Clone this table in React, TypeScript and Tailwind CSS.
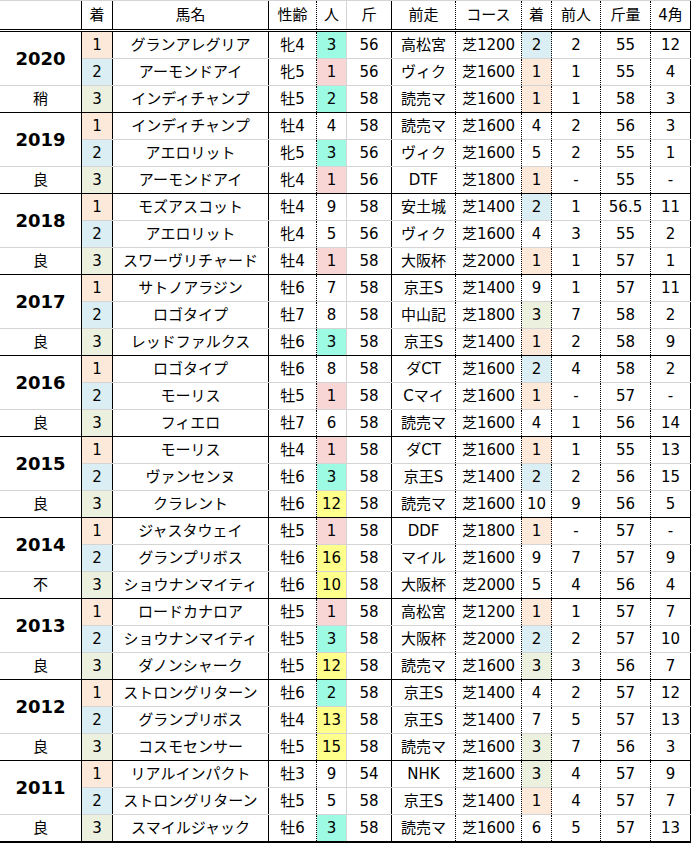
const font = { fontFamily: '"DejaVu Sans", "Noto Sans CJK JP", sans-serif' };

type Row = [string, string, string, string, string, string, string, string, string, string, string];

interface Group {
  year: string;
  cond: string;
  rows: Row[];
}

const groups: Group[] = [
  {
    year: '2020',
    cond: '稍',
    rows: [
      ['1', 'グランアレグリア', '牝4', '3', '56', '高松宮', '芝1200', '2', '2', '55', '12'],
      ['2', 'アーモンドアイ', '牝5', '1', '56', 'ヴィク', '芝1600', '1', '1', '55', '4'],
      ['3', 'インディチャンプ', '牡5', '2', '58', '読売マ', '芝1600', '1', '1', '58', '3'],
    ],
  },
  {
    year: '2019',
    cond: '良',
    rows: [
      ['1', 'インディチャンプ', '牡4', '4', '58', '読売マ', '芝1600', '4', '2', '56', '3'],
      ['2', 'アエロリット', '牝5', '3', '56', 'ヴィク', '芝1600', '5', '2', '55', '1'],
      ['3', 'アーモンドアイ', '牝4', '1', '56', 'DTF', '芝1800', '1', '-', '55', '-'],
    ],
  },
  {
    year: '2018',
    cond: '良',
    rows: [
      ['1', 'モズアスコット', '牡4', '9', '58', '安土城', '芝1400', '2', '1', '56.5', '11'],
      ['2', 'アエロリット', '牝4', '5', '56', 'ヴィク', '芝1600', '4', '3', '55', '2'],
      ['3', 'スワーヴリチャード', '牡4', '1', '58', '大阪杯', '芝2000', '1', '1', '57', '1'],
    ],
  },
  {
    year: '2017',
    cond: '良',
    rows: [
      ['1', 'サトノアラジン', '牡6', '7', '58', '京王S', '芝1400', '9', '1', '57', '11'],
      ['2', 'ロゴタイプ', '牡7', '8', '58', '中山記', '芝1800', '3', '7', '58', '2'],
      ['3', 'レッドファルクス', '牡6', '3', '58', '京王S', '芝1400', '1', '2', '58', '9'],
    ],
  },
  {
    year: '2016',
    cond: '良',
    rows: [
      ['1', 'ロゴタイプ', '牡6', '8', '58', 'ダCT', '芝1600', '2', '4', '58', '2'],
      ['2', 'モーリス', '牡5', '1', '58', 'Cマイ', '芝1600', '1', '-', '57', '-'],
      ['3', 'フィエロ', '牡7', '6', '58', '読売マ', '芝1600', '4', '1', '56', '14'],
    ],
  },
  {
    year: '2015',
    cond: '良',
    rows: [
      ['1', 'モーリス', '牡4', '1', '58', 'ダCT', '芝1600', '1', '1', '55', '13'],
      ['2', 'ヴァンセンヌ', '牡6', '3', '58', '京王S', '芝1400', '2', '2', '56', '15'],
      ['3', 'クラレント', '牡6', '12', '58', '読売マ', '芝1600', '10', '9', '56', '5'],
    ],
  },
  {
    year: '2014',
    cond: '不',
    rows: [
      ['1', 'ジャスタウェイ', '牡5', '1', '58', 'DDF', '芝1800', '1', '-', '57', '-'],
      ['2', 'グランプリボス', '牡6', '16', '58', 'マイル', '芝1600', '9', '7', '57', '9'],
      ['3', 'ショウナンマイティ', '牡6', '10', '58', '大阪杯', '芝2000', '5', '4', '56', '4'],
    ],
  },
  {
    year: '2013',
    cond: '良',
    rows: [
      ['1', 'ロードカナロア', '牡5', '1', '58', '高松宮', '芝1200', '1', '1', '57', '7'],
      ['2', 'ショウナンマイティ', '牡5', '3', '58', '大阪杯', '芝2000', '2', '2', '57', '10'],
      ['3', 'ダノンシャーク', '牡5', '12', '58', '読売マ', '芝1600', '3', '3', '56', '7'],
    ],
  },
  {
    year: '2012',
    cond: '良',
    rows: [
      ['1', 'ストロングリターン', '牡6', '2', '58', '京王S', '芝1400', '4', '2', '57', '12'],
      ['2', 'グランプリボス', '牡4', '13', '58', '京王S', '芝1400', '7', '5', '57', '13'],
      ['3', 'コスモセンサー', '牡5', '15', '58', '読売マ', '芝1600', '3', '7', '56', '3'],
    ],
  },
  {
    year: '2011',
    cond: '良',
    rows: [
      ['1', 'リアルインパクト', '牡3', '9', '54', 'NHK', '芝1600', '3', '4', '57', '9'],
      ['2', 'ストロングリターン', '牡5', '5', '58', '京王S', '芝1400', '1', '4', '57', '7'],
      ['3', 'スマイルジャック', '牡6', '3', '58', '読売マ', '芝1600', '6', '5', '57', '13'],
    ],
  },
];

// width + right border for the 11 columns after the year column
const cols = [
  'w-[31px] border-r border-black',
  'w-[156px] border-r border-black',
  'w-[48px] border-r border-dotted border-black',
  'w-[30px] border-r border-[#d4d4d4]',
  'w-[45px] border-r border-black',
  'w-[64px] border-r border-dotted border-black',
  'w-[66px] border-r border-dotted border-black',
  'w-[30px] border-r border-dotted border-black',
  'w-[49px] border-r border-dotted border-black',
  'w-[50px] border-r border-dotted border-black',
  'w-[40px] border-r border-black',
];

const headers = ['着', '馬名', '性齢', '人', '斤', '前走', 'コース', '着', '前人', '斤量', '4角'];

function placeBg(v: string) {
  if (v === '1') return 'bg-[#fde9d9]';
  if (v === '2') return 'bg-[#daeef3]';
  if (v === '3') return 'bg-[#ebf1de]';
  return '';
}

function popBg(v: string) {
  const n = Number(v);
  if (n === 1) return 'bg-[#f9d6d6]';
  if (n === 2 || n === 3) return 'bg-[#9dfbe3]';
  if (n >= 10) return 'bg-[#ffff8c]';
  return '';
}

function cellBg(i: number, v: string) {
  if (i === 0 || i === 7) return placeBg(v);
  if (i === 3) return popBg(v);
  return '';
}

function DataRow({ row, last, final }: { row: Row; last: boolean; final: boolean }) {
  const line = final ? 'border-b-2 border-black h-[28px]' : last ? 'border-b border-black h-[27px]' : 'border-b border-[#d4d4d4] h-[27px]';
  return (
    <div className={`flex ${line}`}>
      {row.map((v, i) => (
        <div key={i} className={`${cols[i]} ${cellBg(i, v)} h-full flex items-center justify-center whitespace-nowrap`}>
          {v}
        </div>
      ))}
    </div>
  );
}

function YearGroup({ g, final }: { g: Group; final: boolean }) {
  return (
    <div className="flex">
      <div className="w-[82px] border-r border-black flex flex-col">
        <div className="h-[54px] border-b border-[#d4d4d4] flex items-center justify-center font-bold text-[18px]">
          {g.year}
        </div>
        <div className={`${final ? 'h-[28px] border-b-2' : 'h-[27px] border-b'} border-black flex items-center justify-center`}>
          {g.cond}
        </div>
      </div>
      <div className="flex flex-col">
        {g.rows.map((r, i) => (
          <DataRow key={i} row={r} last={i === 2} final={final && i === 2} />
        ))}
      </div>
    </div>
  );
}

export default function App() {
  return (
    <div className="w-[692px] h-[843px] bg-white text-black text-[15px] leading-none" style={font}>
      <div className="w-[691px]">
        <div className="flex h-[32px] border-t border-[#d4d4d4] border-b-[3px] border-double border-b-black">
          <div className="w-[82px] border-r border-black h-full" />
          {headers.map((h, i) => (
            <div key={i} className={`${cols[i]} h-full flex items-center justify-center whitespace-nowrap`}>
              {h}
            </div>
          ))}
        </div>
        {groups.map((g, i) => (
          <YearGroup key={g.year} g={g} final={i === groups.length - 1} />
        ))}
      </div>
    </div>
  );
}
